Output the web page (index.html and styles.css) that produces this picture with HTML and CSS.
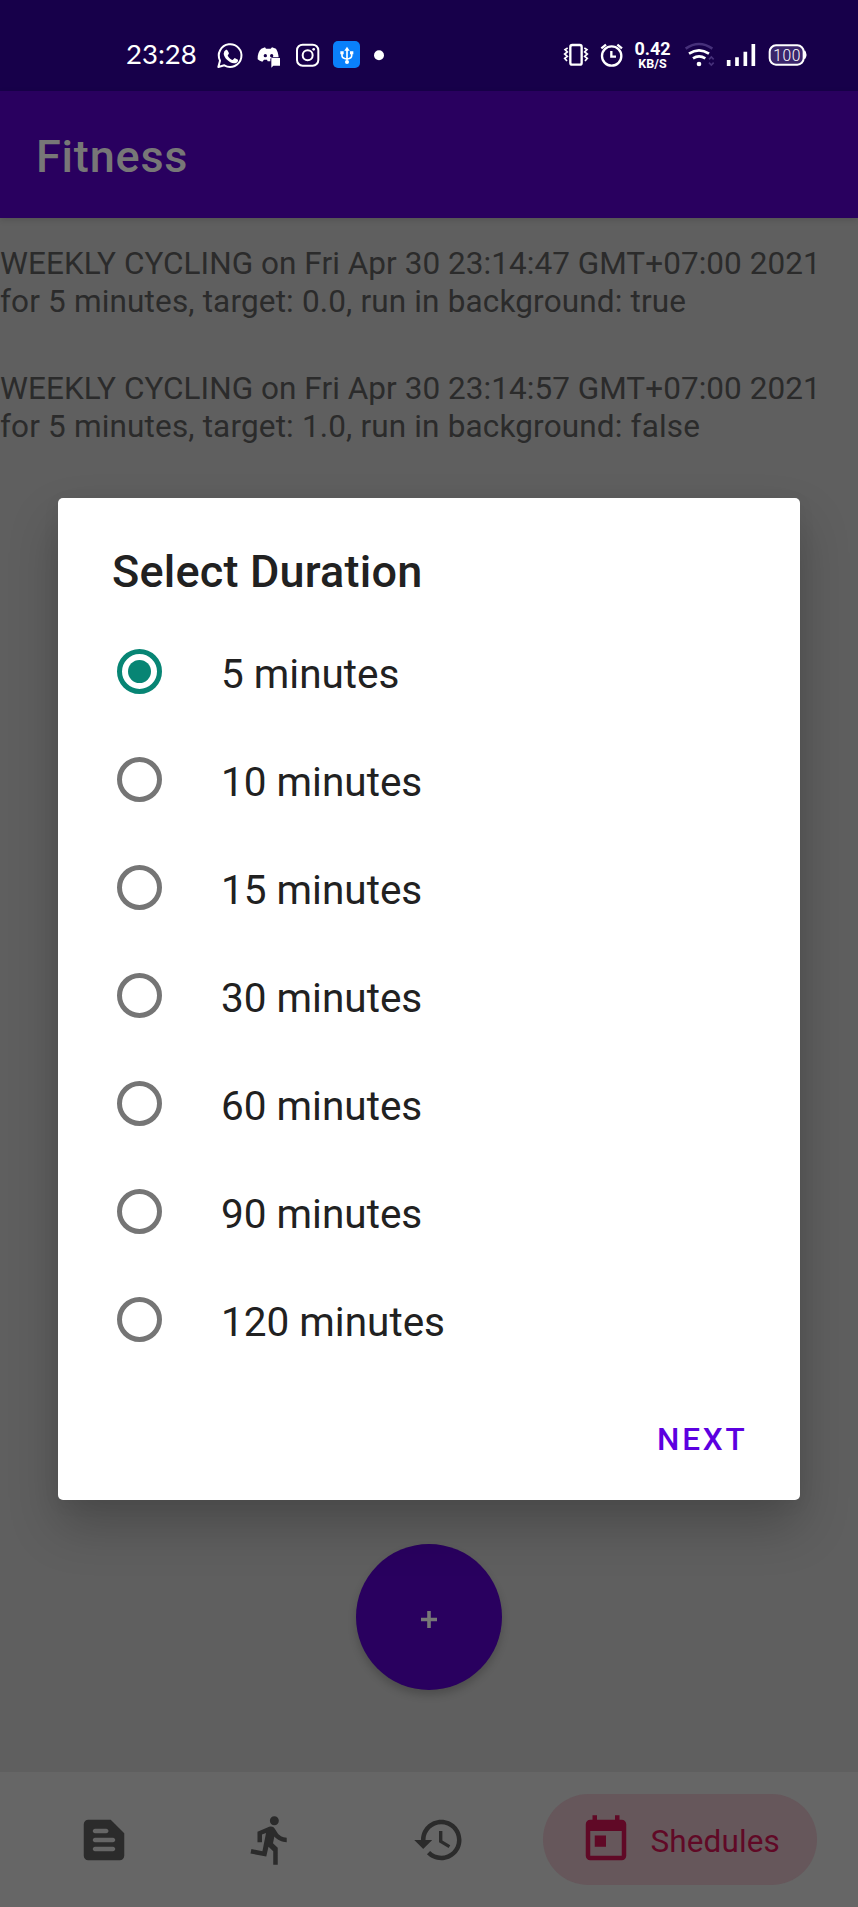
FILE: index.html
```html
<!DOCTYPE html>
<html lang="en">
<head>
<meta charset="utf-8">
<title>Fitness</title>
<link rel="stylesheet" href="styles.css">
</head>
<body>
<div class="screen">
  <header class="status">
    <span class="clock">23:28</span>
    <svg class="status-icons" width="290" height="60" viewBox="0 0 870 180" fill="none" stroke="#fff" stroke-width="6">
      <path d="M325 126l5-19a34 34 0 1 1 13 14z" stroke-linejoin="round"/>
      <path d="M343 79c5-7 9-6 11 0l3 6-4 7c4 7 9 11 15 13l6-6 10 5c1 8-6 11-12 11-15-2-30-17-31-29z" fill="#fff" stroke="none"/>
      <path d="M454 71l11-4 3 4h14l4-4 12 4c4 6 7 14 8 26h-19q-6 0-6 6v6l-8 0-2-5h-9l-5 6q-8-1-14-7c-1-14 4-26 11-32z" fill="#fff" stroke="none"/>
      <path d="M484 99h26v23h-20l-6 6z" fill="#fff" stroke="none"/>
      <circle cx="466" cy="92" r="5" fill="#17004a" stroke="none"/><circle cx="485" cy="92" r="5" fill="#17004a" stroke="none"/>
      <rect x="561" y="59" width="64" height="63" rx="17"/>
      <circle cx="593" cy="91" r="15"/>
      <circle cx="611" cy="73" r="4" fill="#fff" stroke="none"/>
      <rect x="669" y="48" width="81" height="81" rx="15" fill="#0a80fb" stroke="none"/>
      <path d="M711 72v34M696 84v8q0 8 15 10 14-2 14-10v-8" stroke-width="5"/>
      <path d="M703 77l8-12 8 12z" fill="#fff" stroke="none"/>
      <circle cx="711" cy="111" r="6" fill="#fff" stroke="none"/>
      <path d="M691 79h10v9h-10zM720 79h10v9h-10z" fill="#fff" stroke="none"/>
      <circle cx="807" cy="91" r="15" fill="#fff" stroke="none"/>
    </svg>
    <svg class="status-icons right-a" width="75" height="60" viewBox="0 0 225 180" fill="none" stroke="#fff" stroke-width="5">
      <rect x="61" y="60" width="34" height="59" rx="6" stroke-width="7"/>
      <path d="M53 69l-8 5 7 7-8 6 8 7-8 6 7 8M103 69l8 5-7 7 8 6-8 7 8 6-7 8" stroke-width="5"/>
      <circle cx="185" cy="93" r="29" stroke-width="7"/>
      <path d="M154 70l14-11M216 70l-14-11" stroke-width="7"/>
      <path d="M184 78v17h14" stroke-width="7"/>
    </svg>
    <span class="speed"><b>0.42</b><small>KB/S</small></span>
    <svg class="status-icons" width="165" height="60" viewBox="375 0 495 180" fill="none" stroke="#fff" stroke-width="8">
      <path d="M407 71q40-28 80 0" stroke="#46307a"/>
      <path d="M417 86q30-20 60 0M429 100q18-12 37 0"/>
      <circle cx="447" cy="117" r="7" fill="#fff" stroke="none"/>
      <path d="M477 103l7-7 7 7M477 113l7 7 7-7" stroke="#46307a" stroke-width="5"/>
      <path d="M536 105v18M561 97v26M586 80v43M610 57v66" stroke-width="11"/>
      <path d="M762 78q8 11 0 23" stroke-width="7"/>
      <rect x="659" y="61" width="102" height="58" rx="19" fill="#3a256b" stroke-width="6"/>
      <text class="charge" x="670" y="107" textLength="81">100</text>
    </svg>
  </header>
  <div class="appbar">Fitness</div>
  <main class="content">
    <p class="entry"><span class="when">WEEKLY CYCLING on Fri Apr 30 23:14:47 GMT+07:00 2021</span><span>for 5 minutes, target: 0.0, run in background: true</span></p>
    <p class="entry"><span class="when">WEEKLY CYCLING on Fri Apr 30 23:14:57 GMT+07:00 2021</span><span>for 5 minutes, target: 1.0, run in background: false</span></p>
    <button class="fab"><svg width="16" height="17" viewBox="0 0 16 17"><path d="M0 8.5h16M8 0v17" stroke="#777" stroke-width="3.6"/></svg></button>
  </main>
  <nav class="nav">
    <svg class="icon doc" viewBox="0 0 24 24"><path d="M15 3H5c-1.100 0-2 .9-2 2v14c0 1.100.9 2 2 2h14c1.100 0 2-.9 2-2V9l-6-6zM8 17c-.55 0-1-.45-1-1s.45-1 1-1h8c.55 0 1 .45 1 1s-.45 1-1 1H8zm0-4c-.55 0-1-.45-1-1s.45-1 1-1h8c.55 0 1 .45 1 1s-.45 1-1 1H8zm0-4c-.55 0-1-.45-1-1s.45-1 1-1h5c.55 0 1 .45 1 1s-.45 1-1 1H8z"/></svg>
    <svg class="icon run" viewBox="0 0 24 24"><path d="M13.490 5.480c1.100 0 2-.9 2-2s-.9-2-2-2-2 .9-2 2 .9 2 2 2zm-3.600 13.900l1-4.400 2.100 2v6h2v-7.500l-2.100-2 .6-3c1.300 1.500 3.300 2.500 5.500 2.500v-2c-1.900 0-3.500-1-4.300-2.400l-1-1.600c-.4-.6-1-1-1.700-1-.3 0-.5.1-.8.1l-5.200 2.200v4.700h2v-3.400l1.800-.7-1.600 8.100-4.900-1-.4 2 7 1.400z"/></svg>
    <svg class="icon history" viewBox="0 0 24 24"><path d="M13 3c-4.970 0-9 4.030-9 9H1l3.890 3.890.07.14L9 12H6c0-3.870 3.130-7 7-7s7 3.130 7 7-3.130 7-7 7c-1.930 0-3.680-.79-4.940-2.060l-1.420 1.420C8.270 19.990 10.510 21 13 21c4.970 0 9-4.030 9-9s-4.030-9-9-9zm-1 5v5l4.280 2.540.72-1.210-3.500-2.080V8H12z"/></svg>
    <div class="pill">
      <svg class="icon" viewBox="0 0 24 24"><path d="M19 3h-1V1h-2v2H8V1H6v2H5c-1.110 0-1.990.9-1.990 2L3 19c0 1.100.89 2 2 2h14c1.100 0 2-.9 2-2V5c0-1.100-.9-2-2-2zm0 16H5V8h14v11zM7 10h5v5H7z"/></svg>
      <span>Shedules</span>
    </div>
  </nav>
  <section class="dialog">
    <h2 class="title">Select Duration</h2>
    <ul class="options">
      <li class="option"><i class="radio on"></i><span>5 minutes</span></li>
      <li class="option"><i class="radio"></i><span>10 minutes</span></li>
      <li class="option"><i class="radio"></i><span>15 minutes</span></li>
      <li class="option"><i class="radio"></i><span>30 minutes</span></li>
      <li class="option"><i class="radio"></i><span>60 minutes</span></li>
      <li class="option"><i class="radio"></i><span>90 minutes</span></li>
      <li class="option"><i class="radio"></i><span>120 minutes</span></li>
    </ul>
    <button class="next">NEXT</button>
  </section>
</div>
</body>
</html>
```
FILE: styles.css
```css
* { box-sizing: border-box; }
body { margin: 0; font-family: Roboto, sans-serif; }
.screen { position: relative; display: flex; flex-direction: column; width: 858px; height: 1907px; overflow: hidden; background: #5f5f5f; }

.status { display: flex; flex: none; height: 91px; padding-top: 25px; background: #17004a; color: #fff; }
.status-icons { flex: none; display: block; }
.clock { width: 85px; margin: 0 -85px 0 126px; padding-top: 12px; font: 27.500px/34px Lato, sans-serif; white-space: nowrap; }
.clock + .status-icons { margin-left: -16px; }
.right-a { margin-left: 150px; }
.speed { width: 50px; display: flex; flex-direction: column; align-items: center; padding: 15px 0 0 5px; }
.speed b { font-size: 18px; line-height: 17px; font-weight: 700; }
.speed small { font-size: 12.500px; line-height: 13px; font-weight: 700; }
.charge { font: 300 47px Roboto, sans-serif; fill: #fff; stroke: none; }

.appbar { flex: none; height: 127px; padding: 39px 0 0 36px; background: #29005f; color: #777; font-size: 45px; line-height: 53px; font-weight: 500; letter-spacing: 0.8px; box-shadow: 0 2px 6px rgba(0, 0, 0, .13); z-index: 1; }
.content { flex: 1; display: flex; flex-direction: column; padding-top: 27px; }
.entry { display: flex; flex-direction: column; margin: 0 0 50px; height: 75px; font-size: 31.5px; line-height: 37.5px; letter-spacing: 0.16px; color: #2b2b2b; white-space: nowrap; }
.when { letter-spacing: 0.05px; }
.fab { width: 146px; height: 146px; margin: auto auto 82px 356px; padding: 4px 0 0; border: 0; border-radius: 50%; background: #29005f; display: flex; align-items: center; justify-content: center; box-shadow: 0 5px 9px rgba(0, 0, 0, .2); }

.nav { flex: none; display: flex; align-items: center; height: 135px; padding-left: 77px; background: #666; fill: #2b2b2b; }
.icon { flex: none; width: 54px; height: 54px; }
.run { margin-left: 113px; }
.history { margin-left: 113.5px; }
.pill { display: flex; align-items: center; width: 274px; height: 91px; margin-left: 77.5px; padding-left: 35.500px; border-radius: 46px; background: #66575b; color: #600926; fill: #600926; font-size: 31.5px; }
.pill span { margin-left: 18px; padding-top: 3px; letter-spacing: 0.1px; }

.dialog { position: absolute; z-index: 2; left: 58px; top: 498px; width: 742px; height: 1002px; padding: 47px 54px 0; border-radius: 5px; background: #fff; color: #212121; display: flex; flex-direction: column; box-shadow: 0 26px 50px rgba(0, 0, 0, .22), 0 4px 18px rgba(0, 0, 0, .05); }
.title { margin: 0; font-size: 45px; line-height: 54px; font-weight: 500; letter-spacing: 0.2px; white-space: nowrap; }
.options { list-style: none; margin: 18px 0 0; padding: 0; }
.option { display: flex; align-items: center; height: 108px; padding-left: 5px; font-size: 40.5px; }
.option span { margin-left: 59px; padding-top: 6px; }
.radio { width: 45px; height: 45px; border: 5px solid #757575; border-radius: 50%; display: flex; align-items: center; justify-content: center; }
.radio.on { border-color: #078574; }
.radio.on::after { content: ""; width: 23px; height: 23px; border-radius: 50%; background: #078574; }
.next { align-self: flex-end; margin-top: 48px; padding: 0; border: 0; background: none; color: #5c00e0; font: 500 31.5px/37px Roboto, sans-serif; letter-spacing: 2.81px; margin-right: -1.5px; }
```
